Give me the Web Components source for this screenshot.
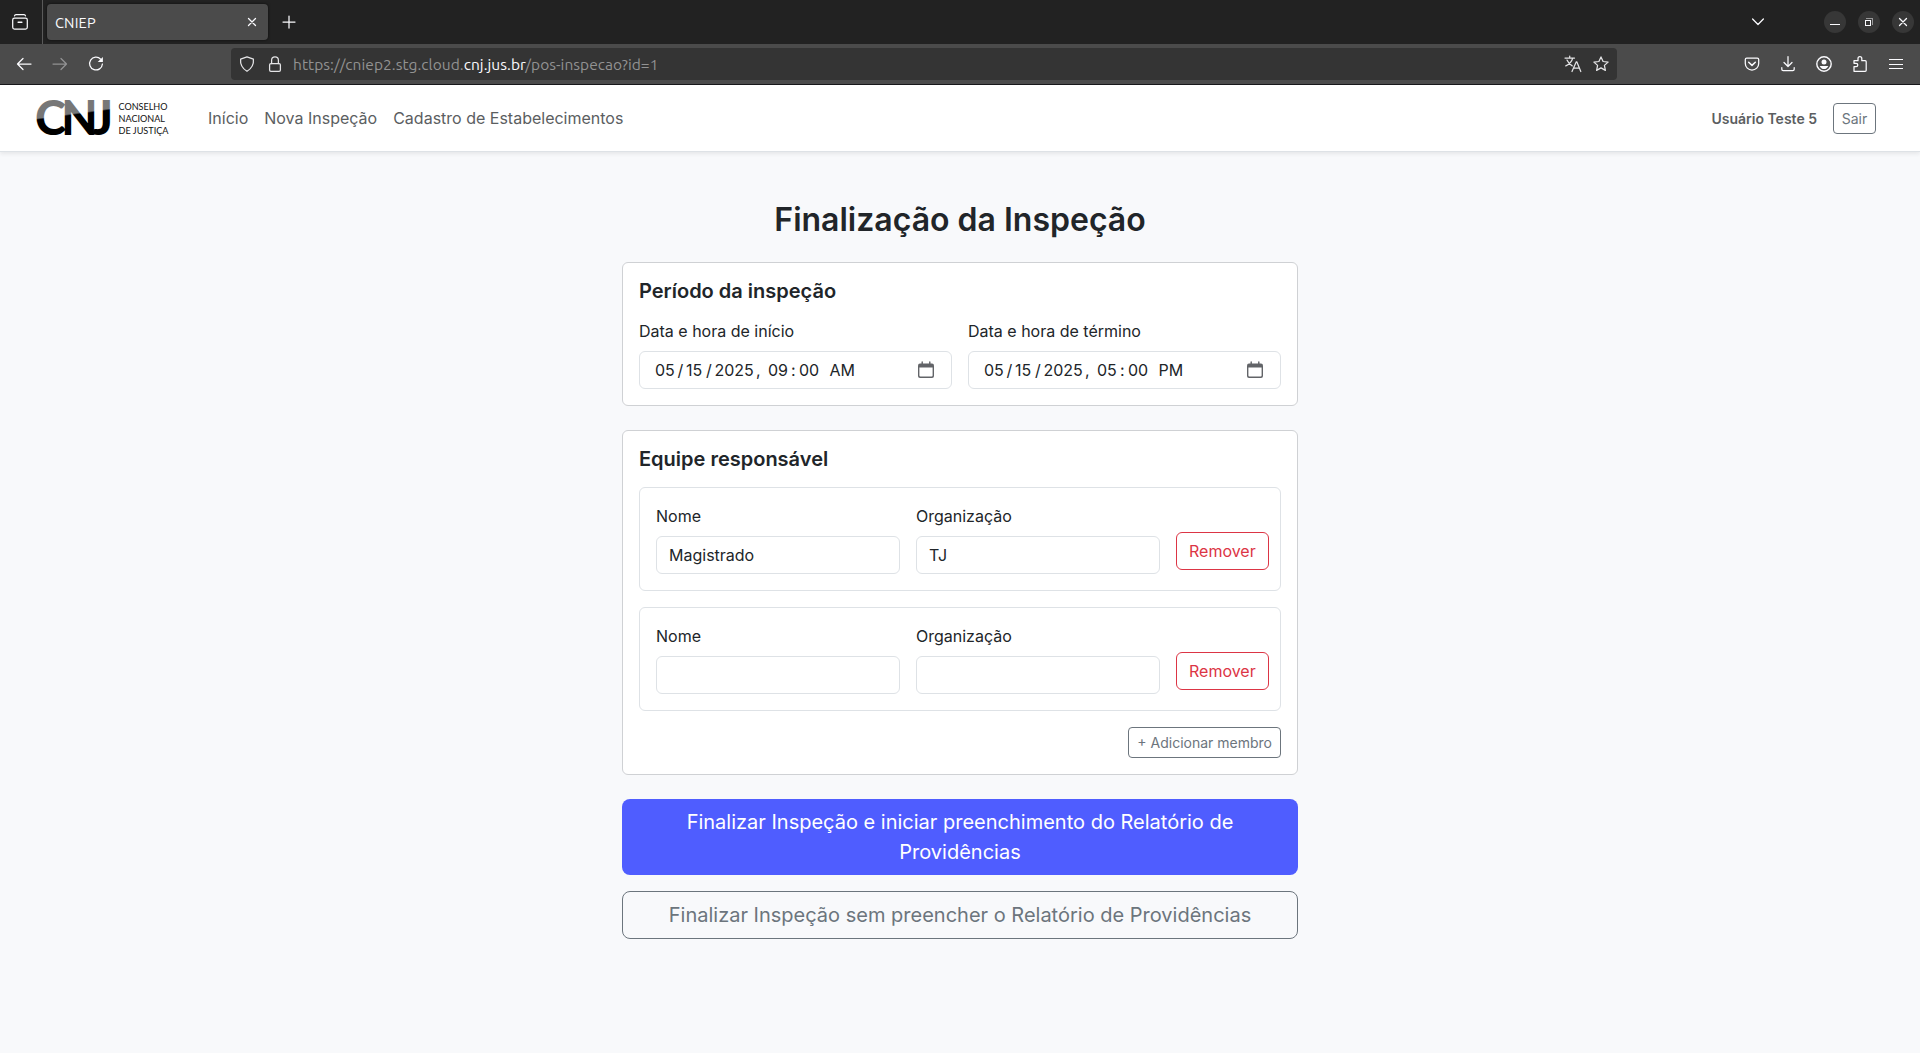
<!DOCTYPE html>
<html lang="pt-BR">
<head>
<meta charset="utf-8">
<title>CNIEP</title>
<style>
html,body{margin:0;height:100%;overflow:hidden}
body{background:#f8f9fb;color:#212529;font:400 16px/24px Inter,"Liberation Sans",sans-serif}
</style>
</head>
<body>
<cniep-app></cniep-app>
<script>
const ICONS = {
  box:['0 0 16 16','<path d="M2.500 1.900Q2.800.6 4 .6h8q1.200 0 1.500 1.300"/><rect x=".7" y="4.100" width="14.600" height="11" rx="1.800"/><path d="M6.200 8.200h3.600" stroke-width="1.600"/>'],
  close:['0 0 8 8','<path d="M.5.5l7 7M7.500.5l-7 7"/>'],
  plus:['0 0 12 12','<path d="M6 0v12M0 6h12"/>'],
  down:['0 0 12 8','<path d="M.6 1L6 6.500 11.400 1"/>'],
  back:['0 0 16 16','<path d="M15 8H1.800M7 2.500L1.500 8 7 13.500"/>'],
  fwd:['0 0 16 16','<path d="M1 8h13.200M9 2.500L14.500 8 9 13.500"/>'],
  reload:['0 0 16 16','<path d="M12.700 3.200A6.400 6.400 0 1 0 14.400 8"/><path d="M14.900.9v5.200H9.700z" fill="currentColor" stroke="none"/>'],
  shield:['0 0 16 16','<path d="M8 .8L14.400 3.100Q15.200 10.800 8 15.300Q.8 10.800 1.600 3.100z"/>'],
  lock:['0 0 16 16','<rect x="2.600" y="7.600" width="10.800" height="7.700" rx="1.300"/><path d="M4.600 7.500V4.200a3.400 3.400 0 0 1 6.800 0v3.300"/>'],
  translate:['0 0 16 16','<path d="M0 2h9.500M4.700 0v2M7.700 2.200C6.800 5.700 4.300 8.400.8 9.900M2 4.100c1.300 2.900 3 4.700 5.200 5.800M7 15.500l4.300-9.700h.5l4 9.700M8.400 12.200h6"/>'],
  star:['0 0 16 16','<path d="M8 .9l2.100 4.600 5 .6-3.700 3.300 1 5L8 11.900l-4.400 2.500 1-5L.9 6.100l5-.6z"/>'],
  pocket:['0 0 16 16','<path d="M2.700 2.200h10.600q1.400 0 1.400 1.400v3.800a6.700 6.700 0 0 1-13.400 0V3.600q0-1.400 1.400-1.400z"/><path d="M4.700 6.300L8 9.400l3.300-3.100" stroke-width="1.500"/>'],
  download:['0 0 16 16','<path d="M8 .5v9.700M4 6.500l4 4 4-4M1.800 11.500v1.800q0 1.400 1.400 1.400h9.600q1.400 0 1.400-1.400v-1.800"/>'],
  user:['0 0 16 16','<circle cx="8" cy="8" r="7.200" stroke-width="1.400"/><circle cx="8" cy="6" r="2.500" fill="currentColor" stroke="none"/><path d="M3.700 10h8.600Q11 13.100 8 13.100T3.700 10z" fill="currentColor" stroke="none"/>'],
  puzzle:['0 0 16 16','<path d="M2 15.300v-4.600h2.100a1.700 1.700 0 0 0 0-3.400H2V4.700h4V2.500a1.900 1.900 0 0 1 3.800 0v2.200h3.400q1 0 1 1v8.600q0 1-1 1z"/>'],
  menu:['0 0 12 12','<path d="M0 1.500h12M0 6.500h12M0 10.500h12" shape-rendering="crispEdges"/>'],
  min:['0 0 8 8','<path d="M0 6.500h8" shape-rendering="crispEdges"/>'],
  restore:['0 0 8 8','<g shape-rendering="crispEdges"><path d="M.5 2.500h5v5h-5z"/><path d="M2 .5h5.500V6" opacity=".5"/></g>'],
  calendar:['0 0 16 16','<path d="M2 1.500h12q2 0 2 2V14q0 2-2 2H2q-2 0-2-2V3.500q0-2 2-2z" fill="currentColor" stroke="none"/><path d="M4.200 0v2M11.800 0v2" stroke-width="1.400"/><path d="M1.400 5.500h13.200v8.100q0 1-1 1H2.400q-1 0-1-1z" fill="#fff" stroke="none"/>']
};
function define(name, render){
  customElements.define(name, class extends HTMLElement{
    connectedCallback(){
      if(this.shadowRoot) return;
      this.attachShadow({mode:'open'}).innerHTML =
        '<style>*{box-sizing:border-box}:host{display:block;box-sizing:border-box}</style>' + render(this);
    }
  });
}
define('ui-icon', el => {
  const [vb, body] = ICONS[el.getAttribute('name')];
  const s = +(el.getAttribute('size') || 16), [, , w, h] = vb.split(' ').map(Number);
  return `<style>:host{display:flex;align-items:center;justify-content:center;flex:none}svg{display:block;overflow:visible}</style>
  <svg width="${s}" height="${s*h/w}" viewBox="${vb}" fill="none" stroke="currentColor" stroke-width="1.250" stroke-linecap="round" stroke-linejoin="round">${body}</svg>`;
});
define('browser-tabs', () => `<style>
:host{display:flex;height:44px;background:#222;color:#fbfbfe;padding-right:6px;align-items:center;font:14.500px/20px Ubuntu,"Noto Sans",sans-serif}
.side{width:40px;margin-right:2px}.rule{width:1px;height:44px;background:#5a5a5a;margin-right:4px}
.tab{width:221px;height:36px;border-radius:4px;background:#4b4b4b;display:flex;align-items:center;padding:0 12px 0 8px;justify-content:space-between;box-shadow:0 0 3px #000a}
.tab span{position:relative;top:1px;letter-spacing:.2px}.new{width:42px}.list{width:36px;margin:0 48px 0 auto}
.win{display:flex;gap:12px}.win ui-icon{width:22px;height:22px;border-radius:50%;background:#373737}
</style><ui-icon class="side" name="box"></ui-icon><i class="rule"></i>
<div class="tab"><span>CNIEP</span><ui-icon name="close" size="8"></ui-icon></div>
<ui-icon class="new" name="plus" size="12"></ui-icon><ui-icon class="list" name="down" size="12"></ui-icon>
<div class="win"><ui-icon name="min" size="8"></ui-icon><ui-icon name="restore" size="8"></ui-icon><ui-icon name="close" size="8"></ui-icon></div>`);
define('browser-toolbar', () => `<style>
:host{display:flex;height:41px;background:#4b4b4b;color:#fbfbfe;padding:0 6px;align-items:center;border-bottom:1px solid #18181b}
ui-icon{width:36px}.off{opacity:.4}
.url{width:1386px;height:32px;margin:0 117px 0 auto;background:#343434;border-radius:4px;display:flex;align-items:center;padding:0 2px;font:15.500px/22px Ubuntu,"Noto Sans",sans-serif;color:#929292}
.url ui-icon{width:28px;color:#e4e4e6}.url span{flex:1;margin:2px 0 0 4px;letter-spacing:.05px}b{font-weight:400;color:#fbfbfe}
</style><ui-icon name="back"></ui-icon><ui-icon class="off" name="fwd"></ui-icon><ui-icon name="reload"></ui-icon>
<div class="url"><ui-icon name="shield"></ui-icon><ui-icon name="lock"></ui-icon><span>https://cniep2.stg.cloud.<b>cnj.jus.br</b>/pos-inspecao?id=1</span><ui-icon name="translate"></ui-icon><ui-icon name="star"></ui-icon></div>
<ui-icon name="pocket"></ui-icon><ui-icon name="download"></ui-icon><ui-icon name="user"></ui-icon><ui-icon name="puzzle"></ui-icon><ui-icon name="menu" size="12"></ui-icon>`);
define('cnj-logo', () => `<style>svg{display:block}text{font-family:Lato,sans-serif}</style>
<svg width="144" height="66" viewBox="0 0 144 66">
<defs><linearGradient id="g" gradientUnits="userSpaceOnUse" x1="42" y1="12" x2="47.400" y2="52"><stop offset=".42" stop-color="#777"/><stop offset=".46" stop-color="#000"/></linearGradient></defs>
<g fill="url(#g)" font-size="48" font-weight="900"><text x="9" y="50" dx="0 -5 -5" textLength="78" lengthAdjust="spacingAndGlyphs">CNJ</text></g>
<g font-size="9.800" fill="#111"><text x="92.500" y="24.500" textLength="49" lengthAdjust="spacingAndGlyphs">CONSELHO</text><text x="92.500" y="37" textLength="46.500" lengthAdjust="spacingAndGlyphs">NACIONAL</text><text x="92.500" y="49" textLength="50" lengthAdjust="spacingAndGlyphs">DE JUSTIÇA</text></g></svg>`);
define('ui-button', () => `<style>
:host{display:flex;align-items:center;justify-content:center;text-align:center;border:1px solid #6c757d;border-radius:6px;color:#6c757d;padding:6px 12px}
:host([kind=danger]){border-color:#dc3545;color:#dc3545}
:host([kind=primary]){border:0;background:#4f5dff;color:#fff}
:host([size=sm]){font-size:14px;line-height:21px;padding:4px 8px;border-radius:4px}
:host([size=lg]){font-size:20px;line-height:30px;padding:8px 16px;border-radius:8px}
</style><slot></slot>`);
define('site-header', () => `<style>
:host{display:flex;align-items:center;height:67px;background:#fff;border-bottom:1px solid #dee2e6;box-shadow:0 2px 4px #00000013;padding:0 44px 0 26px;color:#5b5e61;position:relative}
nav{display:flex;gap:16px;margin-left:38px}b{margin:1px 16px 0 auto;font-size:14px;font-weight:600}ui-button{width:43px;white-space:nowrap}
</style><cnj-logo></cnj-logo><nav><span>Início</span><span>Nova Inspeção</span><span>Cadastro de Estabelecimentos</span></nav><b>Usuário Teste 5</b><ui-button size="sm">Sair</ui-button>`);
define('ui-card', el => `<style>
:host{background:#fff;border:1px solid #cfd1d4;border-radius:6px;padding:16px;margin-bottom:24px}
h2{margin:0 0 16px;font-size:20px;line-height:24px;font-weight:600}
</style><h2>${el.getAttribute('heading')}</h2><slot></slot>`);
define('ui-field', el => `<style>
label{display:block;margin-bottom:8px}
.in{height:38px;border:1px solid #dee2e6;border-radius:6px;padding:6px 12px;background:#fff;display:flex}
</style><label>${el.getAttribute('label')}</label><div class="in"><slot></slot></div>`);
define('date-value', el => {
  const w = [22.5,8.5,20,8.5,41.5,12,23,8,30.500,30];
  return `<style>:host{display:flex;flex:1;padding-left:3px}span{flex:none;white-space:pre}ui-icon{margin-left:auto;margin-right:5px;color:#626468}</style>` +
  el.getAttribute('parts').split('|').map((p,i)=>`<span style="width:${w[i]}px">${p}</span>`).join('') + '<ui-icon name="calendar"></ui-icon>';
});
define('team-member', el => `<style>
:host{display:flex;gap:16px;align-items:flex-end;border:1px solid #dee2e6;border-radius:6px;padding:16px;margin-bottom:16px}
ui-field{flex:0 0 244px}ui-button{flex:none;margin-bottom:4px;height:38px}
</style><ui-field label="Nome">${el.getAttribute('name')||''}</ui-field><ui-field label="Organização">${el.getAttribute('org')||''}</ui-field><ui-button kind="danger">Remover</ui-button>`);
define('cniep-app', () => `<style>
main{width:676px;margin:0 auto;padding-top:49px}
h1{margin:0 0 23px;font-size:32px;line-height:38px;font-weight:600;text-align:center}
.row{display:flex;gap:16px}.row>*{flex:1}.end{display:flex;justify-content:flex-end}.stack{display:grid;gap:16px}
</style><browser-tabs></browser-tabs><browser-toolbar></browser-toolbar><site-header></site-header>
<main><h1>Finalização da Inspeção</h1>
<ui-card heading="Período da inspeção"><div class="row">
<ui-field label="Data e hora de início"><date-value parts="05|/|15|/|2025|,|09|:|00|AM"></date-value></ui-field>
<ui-field label="Data e hora de término"><date-value parts="05|/|15|/|2025|,|05|:|00|PM"></date-value></ui-field></div></ui-card>
<ui-card heading="Equipe responsável"><team-member name="Magistrado" org="TJ"></team-member><team-member></team-member>
<div class="end"><ui-button size="sm">+ Adicionar membro</ui-button></div></ui-card>
<div class="stack"><ui-button kind="primary" size="lg">Finalizar Inspeção e iniciar preenchimento do Relatório de Providências</ui-button>
<ui-button size="lg">Finalizar Inspeção sem preencher o Relatório de Providências</ui-button></div></main>`);
</script>
</body>
</html>
